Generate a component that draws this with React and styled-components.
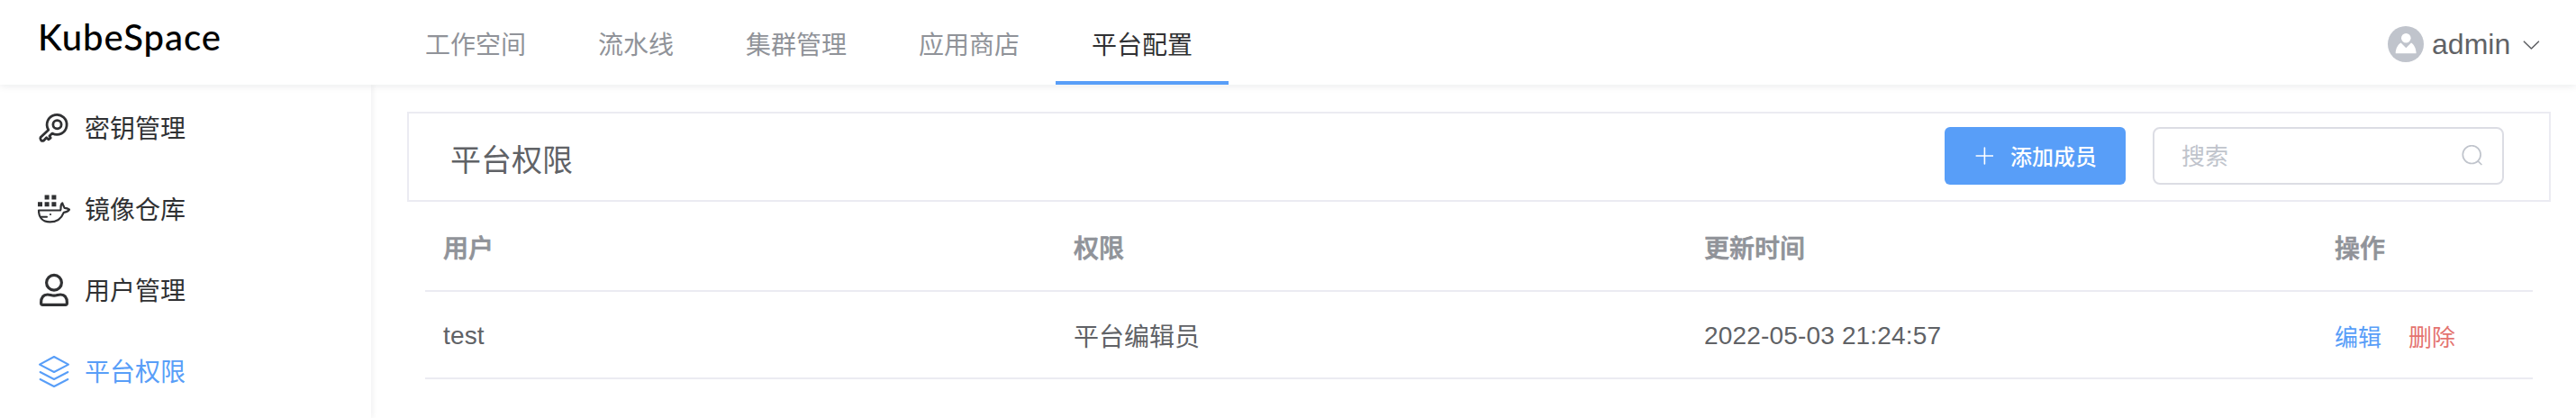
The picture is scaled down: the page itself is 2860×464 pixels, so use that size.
import React from "react";
import styled, { createGlobalStyle } from "styled-components";

const Global = createGlobalStyle`
  * { box-sizing: border-box; }
  body {
    margin: 0;
    background: #fff;
    color: #606266;
    font-family: "Liberation Sans", "Noto Sans CJK SC", sans-serif;
    font-size: 28px;
    overflow: hidden;
  }
`;

const Page = styled.div`
  width: 2860px;
  height: 464px;
  display: flex;
  flex-direction: column;
`;

const Header = styled.header`
  position: relative;
  z-index: 1;
  flex: none;
  height: 94px;
  display: flex;
  background: #fff;
  box-shadow: 0 2px 8px rgba(0, 21, 41, 0.08);
`;

const Logo = styled.div`
  width: 432px;
  padding-left: 42px;
  color: #000;
  font-family: Lato, sans-serif;
  font-size: 40px;
  font-weight: 500;
  letter-spacing: 1px;
  line-height: 82px;
`;

const Tabs = styled.nav`
  display: flex;
  flex: 1;
`;

const Tab = styled.a`
  height: 94px;
  padding: 0 40px;
  line-height: 102px;
  white-space: nowrap;
  color: ${(p) => (p.$active ? "#303133" : "#909399")};
  box-shadow: ${(p) => (p.$active ? "inset 0 -4px 0 #589ef8" : "none")};
`;

const Account = styled.div`
  display: flex;
  align-items: center;
  padding: 4px 40px 0 0;
  font-size: 32px;
`;

const AccountName = styled.span`
  margin: 0 12.8px 0 9px;
`;

const Body = styled.div`
  flex: 1;
  display: flex;
  min-height: 0;
`;

const Sidebar = styled.aside`
  width: 412px;
  flex: none;
  padding-top: 3px;
  box-shadow: 2px 0 6px rgba(0, 21, 41, 0.06);
`;

const SideItem = styled.a`
  display: flex;
  align-items: center;
  gap: 14px;
  height: 90px;
  padding-left: 40px;
  color: ${(p) => (p.$active ? "#589ef8" : "#303133")};
`;

const SideLabel = styled.span`
  padding-bottom: 2px;
`;

const Main = styled.main`
  flex: 1;
  padding: 30px 28px 0 40px;
`;

const Panel = styled.section`
  display: flex;
  align-items: center;
  height: 100px;
  padding: 0 50px 2px 46px;
  border: 2px solid #ebebf2;
`;

const Title = styled.h1`
  flex: 1;
  margin: 0;
  padding-top: 10px;
  font-size: 34px;
  font-weight: 400;
  line-height: 44px;
`;

const AddButton = styled.button`
  display: flex;
  align-items: center;
  width: 201px;
  height: 64px;
  padding: 0 0 0 34px;
  gap: 19px;
  border: 0;
  border-radius: 6px;
  background: #589ef8;
  color: #fff;
  font: 500 24px "Liberation Sans", "Noto Sans CJK SC", sans-serif;
`;

const ButtonLabel = styled.span`
  padding-bottom: 2px;
`;

const Search = styled.div`
  display: flex;
  align-items: center;
  justify-content: space-between;
  width: 390px;
  height: 64px;
  margin-left: 30px;
  padding: 0 22px 0 30px;
  border: 2px solid #dcdde4;
  border-radius: 8px;
  color: #c0c4cc;
  font-size: 26px;
`;

const Placeholder = styled.span`
  padding-bottom: 3px;
`;

const Table = styled.div`
  padding: 0 20px;
`;

const Row = styled.div`
  display: grid;
  grid-template-columns: 700px 700px 700px 1fr;
  align-items: center;
  height: ${(p) => (p.$head ? 100 : 97)}px;
  padding-top: ${(p) => (p.$head ? 1 : 0)}px;
  border-bottom: 2px solid #ebebf2;
  color: ${(p) => (p.$head ? "#909399" : "#606266")};
  font-weight: ${(p) => (p.$head ? 500 : 400)};
  -webkit-text-stroke: ${(p) => (p.$head ? "0.7px #909399" : "0")};
`;

const Cell = styled.div`
  padding-left: 20px;
`;

const LatinCell = styled(Cell)`
  padding-top: 3px;
  letter-spacing: 0.17px;
`;

const Actions = styled(Cell)`
  display: flex;
  gap: 30px;
  padding-top: 1px;
  font-size: 26px;
`;

const Action = styled.a`
  color: ${(p) => (p.$danger ? "#e47470" : "#589ef8")};
`;

const line = { fill: "none", stroke: "currentColor", strokeLinecap: "round", strokeLinejoin: "round" };

const KeyIcon = () => (
  <svg width="40" height="40" viewBox="0 0 40 40" {...line} strokeWidth="2.8">
    <path d="M13.8 22.2 A11 11 0 1 1 18 26.1 L14.9 29 L16.2 31.1 L13.8 32.8 L11.6 30.8 L8.6 34 A2.6 2.6 0 0 1 5 30.6 Z" />
    <circle cx="23.5" cy="16.2" r="4.6" />
  </svg>
);

const DockerIcon = () => (
  <svg width="40" height="40" viewBox="0 0 40 40" {...line}>
    <g fill="currentColor" stroke="none">
      <path d="M9.6 4.5h5v5h-5zM17.4 4.5h5v5h-5zM2 12.2h5v5H2zM9.6 12.2h5v5h-5zM17.4 12.2h5v5h-5z" />
      <circle cx="16" cy="26" r="1.1" />
    </g>
    <path d="M3 21.5 H27 C28.5 20.5 26 16 29.3 13.5 C30 16 31.5 18 31.5 18.8 C33.5 18.8 35.5 19.3 37 20.6 C35.5 23 33 23.6 30.8 23.8 C28 31 22.5 34.4 15.5 34.4 C6.5 34.4 3 28.5 3 21.5 Z" strokeWidth="2.2" />
    <path d="M5 28.8 H12" strokeWidth="2" />
  </svg>
);

const UserIcon = () => (
  <svg width="40" height="40" viewBox="0 0 40 40" {...line} strokeWidth="3.2">
    <circle cx="20" cy="11.8" r="8.4" />
    <path d="M12.8 25 C15.5 25 17 26.2 20 26.2 C23 26.2 24.5 25 27.2 25 C32.5 25 34.4 29 34.4 34.2 Q34.4 36.4 32.6 36.4 H7.4 Q5.6 36.4 5.6 34.2 C5.6 29 7.5 25 12.8 25 Z" />
  </svg>
);

const LayersIcon = () => (
  <svg width="40" height="40" viewBox="0 0 40 40" {...line} strokeWidth="2">
    <path d="M20 4 L36 12.6 L20 21 L4 12.6 Z M4.6 21 L20 29 L35.4 21 M4.6 29 L20 37 L35.4 29" />
  </svg>
);

const Avatar = () => (
  <svg width="40" height="40" viewBox="0 0 40 40">
    <circle cx="20" cy="20" r="20" fill="#c0c4cc" />
    <circle cx="20.3" cy="13.2" r="5.3" fill="#fff" />
    <path d="M8.7 30.3 C8.7 25 11.5 20.3 14.6 18.6 L20.3 24.3 L26 18.6 C29 20.3 31.6 25 31.6 30.3 Z" fill="#fff" />
  </svg>
);

const Chevron = () => (
  <svg width="20" height="12" viewBox="0 0 20 12" {...line} strokeWidth="1.6">
    <path d="M2.4 3.2 L10.4 11 L18.4 3.2" />
  </svg>
);

const Plus = () => (
  <svg width="20" height="20" viewBox="0 0 20 20" {...line} strokeWidth="1.6">
    <path d="M10.4 1 V19 M1.2 10 H19.6" />
  </svg>
);

const SearchIcon = () => (
  <svg width="24" height="24" viewBox="0 0 24 24" {...line} strokeWidth="1.7">
    <circle cx="12.2" cy="10.6" r="9.9" />
    <path d="M19.2 17.8 L22.9 21.5" />
  </svg>
);

const tabs = ["工作空间", "流水线", "集群管理", "应用商店", "平台配置"];
const menu = [
  ["密钥管理", KeyIcon],
  ["镜像仓库", DockerIcon],
  ["用户管理", UserIcon],
  ["平台权限", LayersIcon],
];
const members = [{ user: "test", role: "平台编辑员", updated: "2022-05-03 21:24:57" }];

export default function App() {
  return (
    <Page>
      <Global />
      <Header>
        <Logo>KubeSpace</Logo>
        <Tabs>
          {tabs.map((t) => (
            <Tab key={t} $active={t === "平台配置"}>{t}</Tab>
          ))}
        </Tabs>
        <Account>
          <Avatar />
          <AccountName>admin</AccountName>
          <Chevron />
        </Account>
      </Header>
      <Body>
        <Sidebar>
          {menu.map(([label, Icon]) => (
            <SideItem key={label} $active={label === "平台权限"}>
              <Icon />
              <SideLabel>{label}</SideLabel>
            </SideItem>
          ))}
        </Sidebar>
        <Main>
          <Panel>
            <Title>平台权限</Title>
            <AddButton>
              <Plus />
              <ButtonLabel>添加成员</ButtonLabel>
            </AddButton>
            <Search>
              <Placeholder>搜索</Placeholder>
              <SearchIcon />
            </Search>
          </Panel>
          <Table>
            <Row $head>
              <Cell>用户</Cell>
              <Cell>权限</Cell>
              <Cell>更新时间</Cell>
              <Cell>操作</Cell>
            </Row>
            {members.map((m) => (
              <Row key={m.user}>
                <LatinCell>{m.user}</LatinCell>
                <Cell>{m.role}</Cell>
                <LatinCell>{m.updated}</LatinCell>
                <Actions>
                  <Action>编辑</Action>
                  <Action $danger>删除</Action>
                </Actions>
              </Row>
            ))}
          </Table>
        </Main>
      </Body>
    </Page>
  );
}
